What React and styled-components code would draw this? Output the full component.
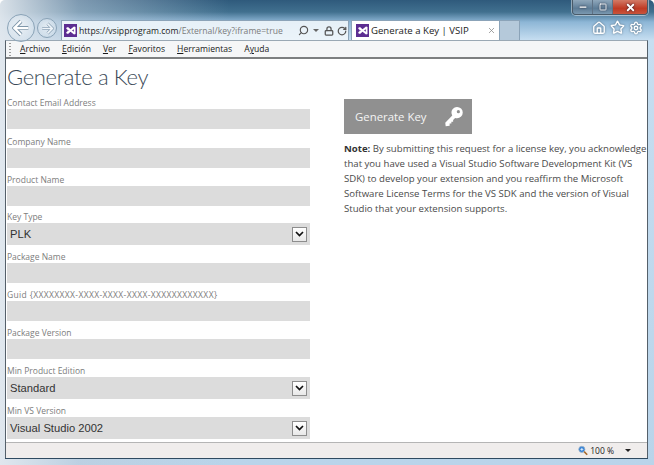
import React from 'react'
import styled, { createGlobalStyle } from 'styled-components'
import { Home, Star, Settings, RotateCw, Lock, Search, X, Minus, Square } from 'lucide-react'

const GlobalStyle = createGlobalStyle`
  html, body { margin: 0; padding: 0; background: #fff; }
  * { box-sizing: border-box; }
`

const Window = styled.div`
  width: 654px;
  height: 465px;
  overflow: hidden;
  display: flex;
  flex-direction: column;
  font-family: "Open Sans", "Liberation Sans", sans-serif;
  background:
    linear-gradient(90deg, rgba(226,232,238,.95) 0, rgba(190,205,220,.55) 12%, rgba(60,110,150,0) 35%),
    linear-gradient(180deg, #2f5a7c 0, #41708f 12px, #8db6d6 22px, #c6def1 40px, #b9d4ea 100%);
  border-radius: 5px 5px 0 0;
`

const TopRow = styled.div`
  height: 15px;
  flex: none;
  display: flex;
  justify-content: flex-end;
  padding-right: 6px;
`

const WinControls = styled.div`
  width: 76px;
  height: 15px;
  display: flex;
  border: 1px solid #4a5a68;
  border-top: none;
  border-radius: 0 0 4px 4px;
  overflow: hidden;
  box-shadow: 0 0 0 1px rgba(255,255,255,.45);
`

const WinButton = styled.div`
  flex: ${p => (p.$close ? '0 0 35px' : '1')};
  display: flex;
  align-items: center;
  justify-content: center;
  color: #fff;
  background: ${p => (p.$close
    ? 'linear-gradient(180deg, #d27a66 0, #bf3a24 60%, #c9543c 100%)'
    : 'linear-gradient(180deg, #8fa7bb 0, #5d7c96 60%, #7b99b1 100%)')};
  border-left: ${p => (p.$first ? 'none' : '1px solid #5f7285')};
  svg { filter: drop-shadow(0 0 1px #223); }
`

const NavRow = styled.div`
  height: 25px;
  flex: none;
  display: flex;
  align-items: flex-end;
  padding-left: 7px;
  position: relative;
  z-index: 2;
`

const NavButton = styled.div`
  flex: none;
  width: ${p => p.$size}px;
  height: ${p => p.$size}px;
  margin: 0 ${p => p.$right}px ${p => p.$bottom}px 0;
  border-radius: 50%;
  border: 1px solid #8aa3b7;
  background: radial-gradient(circle at 50% 40%, rgba(255,255,255,.55), rgba(190,212,230,.35));
  display: flex;
  align-items: center;
  justify-content: center;
`

const AddressBar = styled.div`
  flex: none;
  width: 288px;
  height: 20px;
  margin-right: 2px;
  display: flex;
  align-items: center;
  background: rgba(240,246,251,.9);
  border: 1px solid #8ba3b8;
  border-bottom: none;
  padding-left: 2px;
  font-size: 8.6px;
  color: #7b7b7b;
  white-space: nowrap;
`

const Url = styled.span`
  margin-left: 2px;
  width: 219px;
  flex: none;
  b { font-weight: 400; color: #222; }
`

const AddrTools = styled.div`
  display: flex;
  align-items: center;
  gap: 3px;
  color: #555;
`

const Caret = styled.span`
  width: 0;
  height: 0;
  margin: 0 2px 0 1px;
  border-left: 3px solid transparent;
  border-right: 3px solid transparent;
  border-top: 3px solid ${p => p.$color || '#666'};
`

const Tab = styled.div`
  flex: none;
  width: 149px;
  height: 20px;
  display: flex;
  align-items: center;
  padding: 0 3px 0 4px;
  background: #fff;
  border: 1px solid #8ba3b8;
  border-bottom: none;
  font-size: 9.6px;
  color: #222;
  white-space: nowrap;
`

const TabTitle = styled.span`
  margin-left: 2px;
  flex: 1;
`

const NewTab = styled.div`
  flex: none;
  width: 20px;
  height: 20px;
  background: #b5c9da;
  border: 1px solid #8ba3b8;
  border-left: none;
  border-bottom: none;
`

const RightTools = styled.div`
  margin-left: auto;
  display: flex;
  align-items: center;
  gap: 4px;
  padding: 0 11px 5px 0;
  color: #fff;
  svg { filter: drop-shadow(0 0 1px #5d7488); }
`

const Inner = styled.div`
  flex: 1;
  min-height: 0;
  margin: 0 6px 0 5px;
  display: flex;
  flex-direction: column;
  background: #fff;
  border: 1px solid #55606a;
  border-top-color: #9aa8b4;
  border-bottom: none;
  box-shadow: 0 1px 0 #2f4a60;
`

const MenuBar = styled.div`
  height: 18px;
  flex: none;
  display: flex;
  align-items: center;
  background: #f5f6f7;
  border-bottom: 2px solid #7d7f80;
  font-size: 8.6px;
  color: #1a1a1a;
  padding-left: 3px;
`

const Grip = styled.div`
  width: 2px;
  height: 13px;
  margin-right: 9px;
  background: repeating-linear-gradient(180deg, #9a9a9a 0, #9a9a9a 1px, transparent 1px, transparent 3px);
`

const MenuItem = styled.span`
  margin-right: ${p => p.$gap}px;
  u { text-underline-offset: 1px; }
`

const Page = styled.div`
  flex: 1;
  min-height: 0;
  overflow: hidden;
  display: grid;
  grid-template-columns: 304px 1fr;
  column-gap: 34px;
  padding-right: 2px;
`

const Heading = styled.h1`
  margin: 0 0 0 1px;
  height: 36px;
  font-family: Lato, "Open Sans", sans-serif;
  font-size: 22px;
  line-height: 36px;
  font-weight: 300;
  letter-spacing: -0.35px;
  color: #3b4a57;
`

const Form = styled.div`
  display: flex;
  flex-direction: column;
`

const Field = styled.div`
  display: flex;
  flex-direction: column;
  margin-top: ${p => p.$top || 0}px;
`

const Label = styled.label`
  height: 14px;
  margin-left: 1px;
  font-size: 8.5px;
  line-height: 16px;
  letter-spacing: ${p => p.$spacing || 0}px;
  color: #7d7d7d;
  white-space: nowrap;
`

const TextBox = styled.div`
  height: 20px;
  margin-left: 1px;
  background: #dcdcdc;
`

const SelectBox = styled.div`
  height: 22px;
  margin-left: 1px;
  background: #dcdcdc;
  display: flex;
  align-items: center;
  justify-content: space-between;
  padding: 0 3px 0 3px;
  font-family: "Liberation Sans", Arial, sans-serif;
  font-size: 11.2px;
  color: #333;
`

const ArrowBox = styled.span`
  width: 15px;
  height: 15px;
  background: linear-gradient(180deg, #fff, #e8e8e8);
  border: 1px solid #8d8d8d;
  display: flex;
  align-items: center;
  justify-content: center;
`

const Side = styled.div`
  padding-top: 40px;
`

const GenerateButton = styled.div`
  width: 128px;
  height: 35px;
  background: #909090;
  color: #f4f4f4;
  display: flex;
  align-items: center;
  justify-content: space-between;
  padding: 0 8px 0 11px;
  font-size: 11.4px;
`

const Note = styled.p`
  margin: 7px 0 0;
  font-size: 9.6px;
  line-height: 15px;
  color: #4a4a4a;
  white-space: nowrap;
  b { font-weight: 700; color: #333; }
`

const StatusBar = styled.div`
  height: 16px;
  flex: none;
  display: flex;
  align-items: center;
  justify-content: flex-end;
  background: #f0edec;
  border-top: 1px solid #b5b5b5;
  font-size: 8.5px;
  color: #222;
  padding-right: 14px;
`

const Zoom = styled.span`
  display: flex;
  align-items: center;
  gap: 2px;
  margin-right: 10px;
`

const BottomEdge = styled.div`
  height: 7px;
  flex: none;
`

const VsLogo = ({ size = 13 }) => (
  <svg width={size} height={size} viewBox="0 0 13 13">
    <rect width="13" height="13" fill="#5c2d91" />
    <path d="M2 4l2-1 2.500 2.200L10 2.500l1.500.6v6.800l-1.500.6-3.500-2.700L4 10l-2-1 1.700-2.500z" fill="#fff" />
    <path d="M8 6.500l1.800-1.300v2.600zM3.500 5.500l1.200 1-1.200 1z" fill="#5c2d91" />
  </svg>
)

const ChevronDown = () => (
  <svg width="9" height="6" viewBox="0 0 9 6">
    <path d="M1 1l3.500 3.500L8 1" fill="none" stroke="#111" strokeWidth="1.700" />
  </svg>
)

const ArrowLeft = ({ size }) => (
  <svg width={size} height={size} viewBox="0 0 16 16" fill="none">
    <path d="M8 2L2 8l6 6M2.500 8H14.500" stroke="#7f97aa" strokeWidth="3.600" />
    <path d="M8 2L2 8l6 6M2.500 8H14.500" stroke="#fff" strokeWidth="2" />
  </svg>
)

const ArrowRight = ({ size }) => (
  <svg width={size} height={size} viewBox="0 0 16 16" fill="none">
    <path d="M8 2l6 6-6 6M13.500 8H1.500" stroke="#8aa1b4" strokeWidth="3.600" />
    <path d="M8 2l6 6-6 6M13.500 8H1.500" stroke="#eef4f9" strokeWidth="2" />
  </svg>
)

const KeyIcon = () => (
  <svg width="20" height="21" viewBox="0 0 22 24">
    <path d="M14.500 1a6.500 6.500 0 0 1 0 13c-.8 0-1.500-.1-2.200-.4L10 16v2H8v2H6v2.500L1.500 23 1 19l8-8.200a6.500 6.500 0 0 1 5.500-9.800z" fill="#fff" />
    <circle cx="16" cy="6.500" r="1.800" fill="#909090" />
  </svg>
)

const MagnifierIcon = () => (
  <svg width="10" height="11" viewBox="0 0 13 13">
    <circle cx="5" cy="5" r="4" fill="#2f7fd6" stroke="#9fb4c8" />
    <path d="M3 5h4M5 3v4" stroke="#fff" />
    <path d="M8 8l4 4" stroke="#a8682a" strokeWidth="2" />
  </svg>
)

const fields = [
  { label: 'Contact Email Address', top: 0 },
  { label: 'Company Name', top: 5 },
  { label: 'Product Name', top: 4 },
  { label: 'Key Type', top: 3, value: 'PLK' },
  { label: 'Package Name', top: 4 },
  { label: 'Guid {XXXXXXXX-XXXX-XXXX-XXXX-XXXXXXXXXXXX}', top: 4, spacing: 0.35 },
  { label: 'Package Version', top: 4 },
  { label: 'Min Product Edition', top: 4, value: 'Standard' },
  { label: 'Min VS Version', top: 4, value: 'Visual Studio 2002' },
]

const menus = [
  { key: 'A', rest: 'rchivo', gap: 12 },
  { key: 'E', rest: 'dición', gap: 12 },
  { key: 'V', rest: 'er', gap: 12 },
  { key: 'F', rest: 'avoritos', gap: 12 },
  { key: 'H', rest: 'erramientas', gap: 12 },
]

export default function App() {
  return (
    <Window>
      <GlobalStyle />
      <TopRow>
        <WinControls>
          <WinButton $first><Minus size={10} strokeWidth={3} /></WinButton>
          <WinButton><Square size={8} strokeWidth={2.500} /></WinButton>
          <WinButton $close><X size={11} strokeWidth={4} /></WinButton>
        </WinControls>
      </TopRow>
      <NavRow>
        <NavButton $size={28} $right={2} $bottom={-2}><ArrowLeft size={18} /></NavButton>
        <NavButton $size={20} $right={4} $bottom={2}><ArrowRight size={13} /></NavButton>
        <AddressBar>
          <VsLogo />
          <Url><b>https://vsipprogram.com</b>/External/key?iframe=true</Url>
          <AddrTools>
            <Search size={11} strokeWidth={2.500} style={{ transform: 'scaleX(-1)' }} />
            <Caret />
            <Lock size={10} strokeWidth={3} />
            <RotateCw size={10} strokeWidth={3} />
          </AddrTools>
        </AddressBar>
        <Tab>
          <VsLogo />
          <TabTitle>Generate a Key | VSIP</TabTitle>
          <X size={9} strokeWidth={2} color="#888" />
        </Tab>
        <NewTab />
        <RightTools>
          <Home size={14} strokeWidth={2.200} />
          <Star size={15} strokeWidth={2.200} />
          <Settings size={14} strokeWidth={2.200} />
        </RightTools>
      </NavRow>
      <Inner>
        <MenuBar>
          <Grip />
          {menus.map(m => (
            <MenuItem key={m.key} $gap={m.gap}><u>{m.key}</u>{m.rest}</MenuItem>
          ))}
          <MenuItem $gap={0}>A<u>y</u>uda</MenuItem>
        </MenuBar>
        <Page>
          <div>
            <Heading>Generate a Key</Heading>
            <Form>
              {fields.map(f => (
                <Field key={f.label} $top={f.top}>
                  <Label $spacing={f.spacing}>{f.label}</Label>
                  {f.value ? (
                    <SelectBox>{f.value}<ArrowBox><ChevronDown /></ArrowBox></SelectBox>
                  ) : (
                    <TextBox />
                  )}
                </Field>
              ))}
            </Form>
          </div>
          <Side>
            <GenerateButton>Generate Key <KeyIcon /></GenerateButton>
            <Note>
              <b>Note:</b> By submitting this request for a license key, you acknowledge<br />
              that you have used a Visual Studio Software Development Kit (VS<br />
              SDK) to develop your extension and you reaffirm the Microsoft<br />
              Software License Terms for the VS SDK and the version of Visual<br />
              Studio that your extension supports.
            </Note>
          </Side>
        </Page>
        <StatusBar>
          <Zoom><MagnifierIcon /> 100 %</Zoom>
          <Caret $color="#222" />
        </StatusBar>
      </Inner>
      <BottomEdge />
    </Window>
  )
}
